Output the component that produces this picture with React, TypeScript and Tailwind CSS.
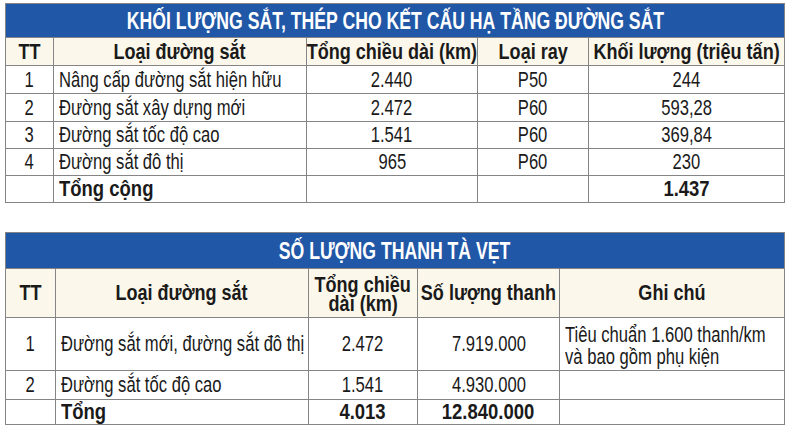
import type { ReactNode } from "react";

const font = { fontFamily: '"Liberation Sans", Arial, sans-serif' };

// the original uses a narrow face we don't have, so text is squeezed horizontally
const squeeze = {
  body: "text-[22px] scale-x-[0.755]",
  head: "text-[22px] font-bold scale-x-[0.82]",
  total: "text-[22px] font-bold scale-x-[0.84]",
  title: "text-[24px] font-bold scale-x-[0.735]",
};
type Kind = keyof typeof squeeze;

const L = ({ children, k = "body" }: { children: ReactNode; k?: Kind }) => (
  <span className={`inline-block whitespace-nowrap origin-left ${squeeze[k]}`}>{children}</span>
);

const C = ({ children, k = "body" }: { children: ReactNode; k?: Kind }) => (
  <div className="flex justify-center">
    <span className={`shrink-0 whitespace-nowrap ${squeeze[k]}`}>{children}</span>
  </div>
);

const steelRows = [
  { tt: "1", name: "Nâng cấp đường sắt hiện hữu", km: "2.440", ray: "P50", mass: "244" },
  { tt: "2", name: "Đường sắt xây dựng mới", km: "2.472", ray: "P60", mass: "593,28" },
  { tt: "3", name: "Đường sắt tốc độ cao", km: "1.541", ray: "P60", mass: "369,84" },
  { tt: "4", name: "Đường sắt đô thị", km: "965", ray: "P60", mass: "230" },
];

const cell = "border border-[#858585] p-0 leading-none";
const title = `${cell} bg-[#2157a7] text-white`;

const SteelTable = () => (
  <table className="w-[779px] table-fixed border-collapse text-[#1a1a1a]">
    <colgroup>
      <col className="w-[48px]" />
      <col className="w-[253px]" />
      <col className="w-[171px]" />
      <col className="w-[111px]" />
      <col className="w-[196px]" />
    </colgroup>
    <thead>
      <tr className="h-[34px]">
        <th colSpan={5} className={title}>
          <C k="title">KHỐI LƯỢNG SẮT, THÉP CHO KẾT CẤU HẠ TẦNG ĐƯỜNG SẮT</C>
        </th>
      </tr>
      <tr className="h-[28px] bg-[#fbf7ea]">
        <th className={cell}><C k="head">TT</C></th>
        <th className={cell}><C k="head">Loại đường sắt</C></th>
        <th className={cell}><C k="head">Tổng chiều dài (km)</C></th>
        <th className={cell}><C k="head">Loại ray</C></th>
        <th className={`${cell} overflow-hidden`}><C k="head">Khối lượng (triệu tấn)</C></th>
      </tr>
    </thead>
    <tbody>
      {steelRows.map((r, i) => (
        <tr key={r.tt} className={i < 2 ? "h-[28px]" : "h-[27px]"}>
          <td className={cell}><C>{r.tt}</C></td>
          <td className={`${cell} pl-[5px]`}><L>{r.name}</L></td>
          <td className={cell}><C>{r.km}</C></td>
          <td className={cell}><C>{r.ray}</C></td>
          <td className={cell}><C>{r.mass}</C></td>
        </tr>
      ))}
      <tr className="h-[27px]">
        <td className={cell}></td>
        <td className={`${cell} pl-[5px]`}><L k="total">Tổng cộng</L></td>
        <td className={cell}></td>
        <td className={cell}></td>
        <td className={cell}><C k="total">1.437</C></td>
      </tr>
    </tbody>
  </table>
);

const SleeperTable = () => (
  <table className="w-[779px] table-fixed border-collapse text-[#1a1a1a]">
    <colgroup>
      <col className="w-[50px]" />
      <col className="w-[253px]" />
      <col className="w-[109px]" />
      <col className="w-[142px]" />
      <col className="w-[225px]" />
    </colgroup>
    <thead>
      <tr className="h-[36px]">
        <th colSpan={5} className={title}>
          <C k="title">SỐ LƯỢNG THANH TÀ VẸT</C>
        </th>
      </tr>
      <tr className="h-[49px] bg-[#fbf7ea]">
        <th className={cell}><C k="head">TT</C></th>
        <th className={cell}><C k="head">Loại đường sắt</C></th>
        <th className={cell}>
          <div className="h-[19px]"><C k="head">Tổng chiều</C></div>
          <div className="h-[19px]"><C k="head">dài (km)</C></div>
        </th>
        <th className={cell}><C k="head">Số lượng thanh</C></th>
        <th className={cell}><C k="head">Ghi chú</C></th>
      </tr>
    </thead>
    <tbody>
      <tr className="h-[53px]">
        <td className={cell}><C>1</C></td>
        <td className={`${cell} pl-[5px]`}><L>Đường sắt mới, đường sắt đô thị</L></td>
        <td className={cell}><C>2.472</C></td>
        <td className={cell}><C>7.919.000</C></td>
        <td className={`${cell} pl-[5px]`}>
          <div className="h-[22px] pt-[2px]"><L>Tiêu chuẩn 1.600 thanh/km</L></div>
          <div className="h-[22px] pt-[2px]"><L>và bao gồm phụ kiện</L></div>
        </td>
      </tr>
      <tr className="h-[29px]">
        <td className={cell}><C>2</C></td>
        <td className={`${cell} pl-[5px]`}><L>Đường sắt tốc độ cao</L></td>
        <td className={cell}><C>1.541</C></td>
        <td className={cell}><C>4.930.000</C></td>
        <td className={cell}></td>
      </tr>
      <tr className="h-[25px]">
        <td className={cell}></td>
        <td className={`${cell} pl-[5px]`}><L k="total">Tổng</L></td>
        <td className={cell}><C k="total">4.013</C></td>
        <td className={cell}><C k="total">12.840.000</C></td>
        <td className={cell}></td>
      </tr>
    </tbody>
  </table>
);

export default function App() {
  return (
    <div className="w-[791px] h-[432px] overflow-hidden bg-white pl-[5px] pt-[3px] flex flex-col gap-[29px]" style={font}>
      <SteelTable />
      <SleeperTable />
    </div>
  );
}
